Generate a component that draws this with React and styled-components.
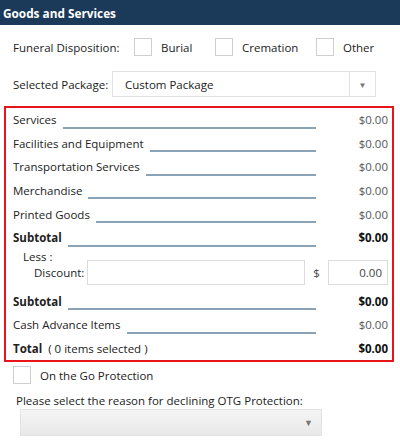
import React from "react";
import styled, { createGlobalStyle } from "styled-components";

const GlobalStyle = createGlobalStyle`
  body {
    margin: 0;
    background: #fff;
    font-family: "Open Sans", "Noto Sans", sans-serif;
    font-size: 11.5px;
    color: #222;
  }
`;

const Page = styled.div`
  width: 400px;
  height: 445px;
  overflow: hidden;
`;

const Header = styled.div`
  height: 25px;
  background: #1b3a5a;
  color: #fff;
  font-weight: 700;
  font-size: 11.8px;
  display: flex;
  align-items: center;
  padding-left: 3px;
`;

const Row = styled.div`
  display: flex;
  align-items: center;
  padding-left: 13px;
  height: ${({ h }) => h || 24}px;
  margin-top: ${({ mt }) => mt || 0}px;
  white-space: nowrap;
`;

const FieldLabel = styled.span`
  width: ${({ w }) => w}px;
  flex-shrink: 0;
`;

const CheckBox = styled.span`
  display: inline-block;
  width: 16px;
  height: 16px;
  border: 1px solid #cfcfcf;
  background: #fff;
  flex-shrink: 0;
`;

const CheckItem = styled.label`
  display: flex;
  align-items: center;
  gap: 9px;
  width: ${({ w }) => (w ? `${w}px` : "auto")};
`;

const Select = styled.div`
  display: flex;
  align-items: stretch;
  width: ${({ w }) => w}px;
  height: ${({ h }) => h}px;
  border: 1px solid #e2e2e2;
  box-sizing: border-box;
  background: ${({ $grad }) =>
    $grad ? "linear-gradient(#f5f5f5, #e8e8e8)" : "#fff"};
`;

const SelectText = styled.div`
  flex: 1;
  display: flex;
  align-items: center;
  padding-left: 12px;
`;

const Arrow = styled.div`
  width: 25px;
  display: flex;
  align-items: center;
  justify-content: center;
  border-left: ${({ $divider }) => ($divider ? "1px solid #e2e2e2" : "none")};
  color: #777;
  font-size: ${({ $divider }) => ($divider ? 8 : 9)}px;
`;

const Summary = styled.div`
  margin: 9px 6px 0 4px;
  border: 2px solid #e8141b;
  padding: 0 4px 0 7px;
  box-sizing: border-box;
`;

const Line = styled.div`
  display: flex;
  align-items: center;
  height: 23.6px;
  font-weight: ${({ $bold }) => ($bold ? 700 : 400)};
`;

const LineLabel = styled.span`
  white-space: nowrap;
  color: #222;
`;

const Note = styled.span`
  font-weight: 400;
  margin-left: 6px;
`;

const Leader = styled.span`
  flex: 1;
  align-self: flex-end;
  margin: 0 0 3px 6px;
  border-bottom: 2px solid
    ${({ $blank }) => ($blank ? "transparent" : "#8aa3b7")};
`;

const Amount = styled.span`
  width: 72px;
  text-align: right;
  color: ${({ $bold }) => ($bold ? "#111" : "#555")};
`;

const LessLabel = styled.div`
  padding-left: 10px;
  height: 10px;
  line-height: 14px;
`;

const DiscountRow = styled.div`
  display: flex;
  align-items: center;
  height: 25px;
  padding-left: 21px;
  margin-bottom: 5px;
`;

const DiscountLabel = styled.span`
  margin-right: 3px;
`;

const Input = styled.div`
  height: 25px;
  box-sizing: border-box;
  border: 1px solid #dcdcdc;
  background: #fff;
  display: flex;
  align-items: center;
  justify-content: flex-end;
  padding-right: 5px;
  color: #444;
  width: ${({ w }) => (w ? `${w}px` : "auto")};
  flex: ${({ $grow }) => ($grow ? 1 : "none")};
`;

const Dollar = styled.span`
  width: 23px;
  text-align: center;
  color: #444;
`;

const Prompt = styled.div`
  padding-left: 16px;
  margin-top: 9px;
`;

const ReasonWrap = styled.div`
  padding-left: 20px;
  margin-top: 1px;
`;

const lines = [
  ["Services", "$0.00"],
  ["Facilities and Equipment", "$0.00"],
  ["Transportation Services", "$0.00"],
  ["Merchandise", "$0.00"],
  ["Printed Goods", "$0.00"],
];

export default function App() {
  return (
    <Page>
      <GlobalStyle />
      <Header>Goods and Services</Header>
      <Row h={24} mt={10}>
        <FieldLabel w={121}>Funeral Disposition:</FieldLabel>
        <CheckItem w={81}>
          <CheckBox />
          Burial
        </CheckItem>
        <CheckItem w={101}>
          <CheckBox />
          Cremation
        </CheckItem>
        <CheckItem>
          <CheckBox />
          Other
        </CheckItem>
      </Row>
      <Row h={26} mt={12}>
        <FieldLabel w={99}>Selected Package:</FieldLabel>
        <Select w={264} h={26}>
          <SelectText>Custom Package</SelectText>
          <Arrow $divider>▼</Arrow>
        </Select>
      </Row>
      <Summary>
        {lines.map(([label, value]) => (
          <Line key={label}>
            <LineLabel>{label}</LineLabel>
            <Leader />
            <Amount>{value}</Amount>
          </Line>
        ))}
        <Line $bold>
          <LineLabel>Subtotal</LineLabel>
          <Leader />
          <Amount $bold>$0.00</Amount>
        </Line>
        <LessLabel>Less :</LessLabel>
        <DiscountRow>
          <DiscountLabel>Discount:</DiscountLabel>
          <Input $grow />
          <Dollar>$</Dollar>
          <Input w={60}>0.00</Input>
        </DiscountRow>
        <Line $bold>
          <LineLabel>Subtotal</LineLabel>
          <Leader />
          <Amount $bold>$0.00</Amount>
        </Line>
        <Line>
          <LineLabel>Cash Advance Items</LineLabel>
          <Leader />
          <Amount>$0.00</Amount>
        </Line>
        <Line $bold>
          <LineLabel>
            Total<Note>( 0 items selected )</Note>
          </LineLabel>
          <Leader $blank />
          <Amount $bold>$0.00</Amount>
        </Line>
      </Summary>
      <Row h={18} mt={4}>
        <CheckItem>
          <CheckBox />
          <span>On the Go Protection</span>
        </CheckItem>
      </Row>
      <Prompt>Please select the reason for declining OTG Protection:</Prompt>
      <ReasonWrap>
        <Select w={302} h={27} $grad>
          <SelectText />
          <Arrow>▼</Arrow>
        </Select>
      </ReasonWrap>
    </Page>
  );
}
